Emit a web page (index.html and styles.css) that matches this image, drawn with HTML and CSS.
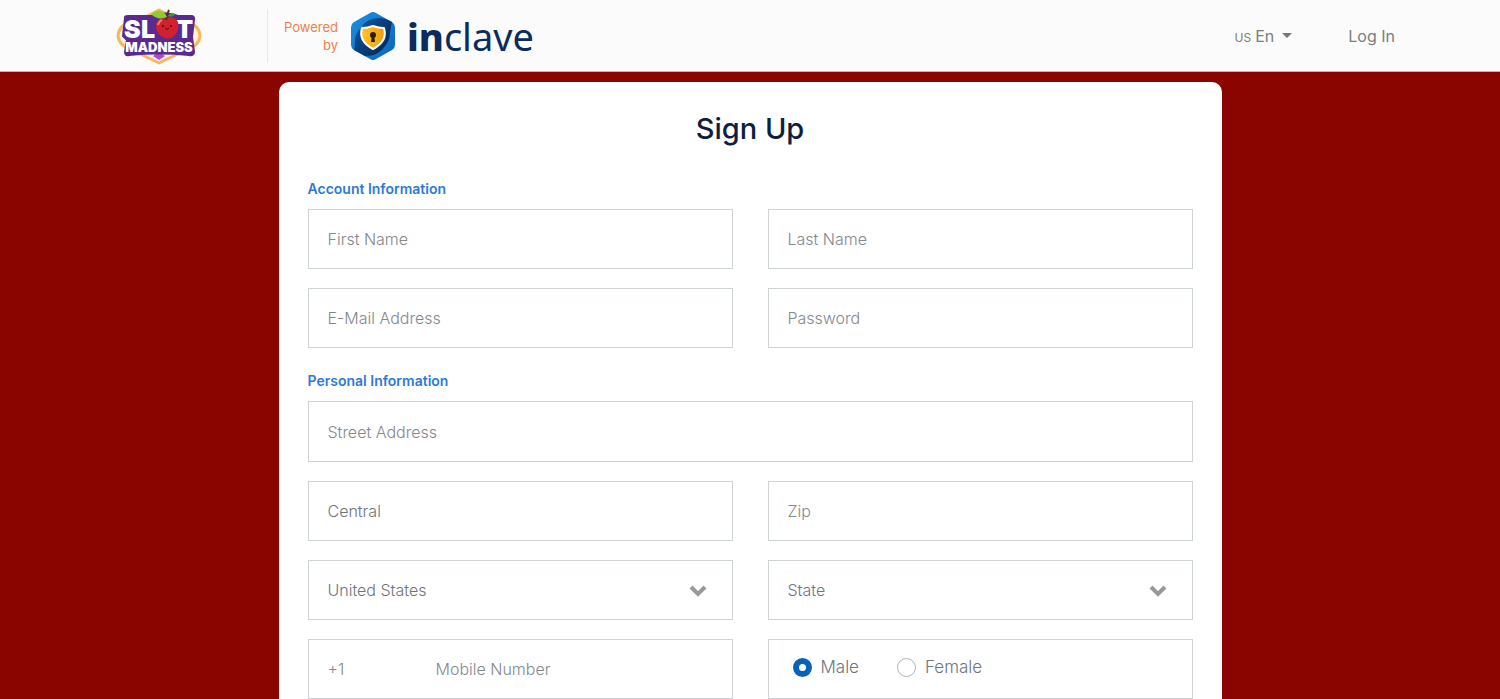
FILE: index.html
```html
<!DOCTYPE html>
<html lang="en">
<head>
  <meta charset="UTF-8" />
  <meta name="viewport" content="width=device-width, initial-scale=1" />
  <title>Sign Up</title>
  <link rel="stylesheet" href="styles.css">
</head>

<body>

  <header class="site-header">
    <a href="#" class="brand" aria-label="Slot Madness">
      <svg width="86" height="60" viewBox="0 0 86 60">
        <path d="M12 17 Q2 21 2 30 Q3 40 14 42 M74 17 Q84 21 84 30 Q83 40 72 42" fill="#fff3cf" stroke="#f3b95a" stroke-width="3" />
        <path d="M43 4 L70 18 L72 43 L43 57 L14 43 L16 18 Z" fill="#fbeaf6" stroke="#f3b95a" stroke-width="3" stroke-linejoin="round" />
        <path d="M43 46 L49 50 L43 54 L37 50 Z" fill="#b04bc8" />
        <path d="M9 12 Q8 10 12 10 L36 10 Q50 5 62 10 L75 10 Q79 10 78 14 L76 31 L78 46 Q78 50 73 49 Q43 46 13 49 Q9 50 9 46 L11 34 L7 30 Z" fill="#5b2a8e" stroke="#5b2a8e" stroke-width="2" stroke-linejoin="round" />
        <g class="brand-text">
          <text x="8" y="32" font-size="25">S</text>
          <text x="25" y="32" font-size="25">L</text>
          <text x="60" y="32" font-size="25">T</text>
          <text x="43" y="46" font-size="13" text-anchor="middle">MADNESS</text>
        </g>
        <path d="M50 13 Q58 9 62 16 Q64 25 57 31 Q52 34 47 31 Q39 27 40 18 Q43 10 50 13 Z" fill="#d3202f" />
        <path d="M42 19 Q43 15 46 14" fill="none" stroke="#f0776d" stroke-width="2" />
        <path d="M50 14 Q51 8 53 4" fill="none" stroke="#55301d" stroke-width="2" />
        <path d="M51 11 Q42 15 35 8 Q46 0 51 11 Z" fill="#8bcc2e" />
        <path d="M52 10 Q55 5 59 8 Q57 12 52 10 Z" fill="#3d9b31" />
        <circle cx="47" cy="20" r="1" fill="#4a0d16" />
        <circle cx="55" cy="20" r="1" fill="#4a0d16" />
        <path d="M49 22 Q51 25 53 22" fill="none" stroke="#4a0d16" />
      </svg>
    </a>

    <div class="powered">
      <span class="powered-label">Powered by</span>
      <svg width="44" height="48" viewBox="0 0 44 48" aria-hidden="true">
        <defs>
          <linearGradient id="hexBlue" x1="0" y1="0" x2="1" y2="1">
            <stop offset="0" stop-color="#1a8fe0" />
            <stop offset="1" stop-color="#0a66bb" />
          </linearGradient>
          <linearGradient id="swirlTop" x1="0" y1="0" x2="1" y2="1">
            <stop offset="0" stop-color="#0d5aa6" />
            <stop offset="1" stop-color="#061e48" />
          </linearGradient>
          <linearGradient id="swirlBottom" x1="0" y1="0" x2="1" y2="1">
            <stop offset="0" stop-color="#0c58a5" />
            <stop offset="1" stop-color="#062452" />
          </linearGradient>
          <linearGradient id="shieldGold" x1="0" y1="0" x2="1" y2="0">
            <stop offset="0" stop-color="#ffc629" />
            <stop offset="1" stop-color="#f29a0c" />
          </linearGradient>
        </defs>
        <path d="M19 1 Q22 -1 25 1 L41 10 Q44 12 44 15 L44 33 Q44 36 41 38 L25 47 Q22 49 19 47 L3 38 Q0 36 0 33 L0 15 Q0 12 3 10 Z" fill="url(#hexBlue)" />
        <path d="M10 16 Q15 6 28 6 Q34 6 41 10 Q40 15 39 20 Q39 29 33 35 Q36 25 33 16 Z" fill="url(#swirlTop)" />
        <path d="M10 16 Q4 21 4 29 Q4 35 3 38 L14 44 Q28 44 34 34 L34 28 L22 37 L11 28 Z" fill="url(#swirlBottom)" />
        <path d="M22 14 Q27 16 33 16 Q37 29 22 37 Q7 29 11 16 Q17 16 22 14 Z" fill="url(#shieldGold)" stroke="#fff" stroke-width="2" stroke-linejoin="round" />
        <circle cx="22" cy="23" r="3" fill="#27200e" />
        <path d="M21 23 H23 L24 30 H20 Z" fill="#27200e" />
      </svg>
      <span class="wordmark"><b>in</b>clave</span>
    </div>

    <nav class="site-nav">
      <button type="button" class="lang"><small>US</small> En <span class="caret"></span></button>
      <a href="#">Log In</a>
    </nav>
  </header>

  <main class="card">
    <h1>Sign Up</h1>

    <form id="signup-form">
      <!-- Account Information -->
      <h2>Account Information</h2>
      <div class="fields">
        <input type="text" class="field" name="firstName" placeholder="First Name" aria-label="First Name" />
        <input type="text" class="field" name="lastName" placeholder="Last Name" aria-label="Last Name" />
        <input type="email" class="field" name="email" placeholder="E-Mail Address" aria-label="E-Mail Address" />
        <input type="password" class="field" name="password" placeholder="Password" aria-label="Password" />
      </div>

      <!-- Personal Information -->
      <h2>Personal Information</h2>
      <div class="fields">
        <input type="text" class="field wide" name="address" placeholder="Street Address" aria-label="Street Address" />
        <input type="text" class="field" name="city" value="Central" aria-label="City" />
        <input type="text" class="field" name="zip" placeholder="Zip" aria-label="Zip" />
        <div class="select-wrap">
          <select class="field" name="country" aria-label="Country">
            <option>United States</option>
          </select>
          <svg class="chevron" width="18" height="14" viewBox="0 0 18 14"><path d="M2 3 L9 10 L16 3" /></svg>
        </div>
        <div class="select-wrap">
          <select class="field" name="state" aria-label="State">
            <option>State</option>
          </select>
          <svg class="chevron" width="18" height="14" viewBox="0 0 18 14"><path d="M2 3 L9 10 L16 3" /></svg>
        </div>
        <div class="field phone">
          <input type="text" class="code" name="code" placeholder="+1" aria-label="Country code" />
          <input type="tel" name="mobile" placeholder="Mobile Number" aria-label="Mobile Number" />
        </div>
        <div class="field gender">
          <label><input type="radio" name="gender" value="male" checked />Male</label>
          <label><input type="radio" name="gender" value="female" />Female</label>
        </div>
      </div>
    </form>
  </main>

</body>
</html>
```

FILE: styles.css
```css
* {
  box-sizing: border-box;
}
body {
  margin: 0;
  background: #8b0500;
  font-family: Inter, "Open Sans", sans-serif;
  font-weight: 300;
  color: #6c757d;
}
.site-header {
  display: flex;
  align-items: center;
  height: 72px;
  padding: 0 105px 0 116px;
  background: #fbfbfb;
  border-bottom: 1px solid #c9b5b3;
}
.brand {
  display: block;
  height: 60px;
}
.brand-text {
  font-family: Inter, sans-serif;
  font-weight: 900;
  fill: #fff;
}
.powered {
  display: flex;
  align-items: center;
  height: 54px;
  margin-left: 65px;
  padding-left: 16px;
  border-left: 1px solid #e6e8f0;
}
.powered-label {
  width: 54px;
  margin-right: 13px;
  font-size: 13px;
  font-weight: 400;
  line-height: 18px;
  text-align: right;
  color: #ef7f45;
}
.wordmark {
  margin-left: 12px;
  font-family: "Noto Sans", sans-serif;
  font-size: 38px;
  font-weight: 400;
  line-height: 48px;
  color: #0b2c5c;
}
.wordmark b {
  font-weight: 800;
}
.site-nav {
  display: flex;
  align-items: center;
  gap: 56px;
  margin-left: auto;
  font-size: 16px;
  font-weight: 400;
}
.site-nav a {
  color: #7d7d7d;
  text-decoration: none;
}
.lang {
  display: flex;
  align-items: baseline;
  gap: 4px;
  padding: 0;
  border: none;
  background: none;
  font: inherit;
  color: #7d7d7d;
  cursor: pointer;
}
.lang small {
  font-size: 12px;
}
.caret {
  align-self: center;
  margin-left: 4px;
  border: 5px solid transparent;
  border-top-color: #777;
  border-bottom: none;
}
.card {
  max-width: 943px;
  margin: 10px auto 40px;
  padding: 27px 29px 40px;
  background: #fff;
  border-radius: 10px;
}
h1 {
  margin: 0 0 31px;
  font-size: 29px;
  font-weight: 500;
  line-height: 40px;
  text-align: center;
  color: #0c1e42;
}
h2 {
  margin: 0 0 12px;
  font-size: 14px;
  font-weight: 600;
  line-height: 17px;
  color: #2b7bd6;
}
.fields {
  display: grid;
  grid-template-columns: 1fr 1fr;
  gap: 19px 35px;
  margin-bottom: 24px;
}
.field {
  width: 100%;
  height: 60px;
  padding: 0 19px;
  border: 1px solid #ced4d6;
  border-radius: 0;
  background: #fff;
  font: inherit;
  font-size: 16px;
  color: #6c757d;
}
.wide {
  grid-column: 1 / -1;
  height: 61px;
}
::placeholder {
  color: #83888d;
  opacity: 1;
}
.select-wrap {
  position: relative;
}
select.field {
  appearance: none;
}
.chevron {
  position: absolute;
  top: 24px;
  right: 26px;
  pointer-events: none;
}
.chevron path {
  fill: none;
  stroke: #999;
  stroke-width: 4;
}
.phone {
  display: flex;
}
.phone input {
  flex: 1;
  min-width: 0;
  padding: 0;
  border: none;
  background: none;
  font: inherit;
  color: inherit;
}
.phone .code {
  flex: 0 0 108px;
}
.gender {
  display: flex;
  align-items: center;
  gap: 38px;
  padding: 0 24px 4px;
  font-size: 17px;
}
.gender label {
  display: flex;
  align-items: center;
  gap: 9px;
}
.gender input {
  appearance: none;
  width: 19px;
  height: 19px;
  margin: 0;
  border: 1px solid #adb5bd;
  border-radius: 50%;
  background: #fff;
}
.gender input:checked {
  border: 6px solid #0763b8;
}
@media (max-width: 700px) {
  .site-header {
    padding: 0 16px;
  }
  .powered {
    margin-left: 16px;
  }
  .fields {
    grid-template-columns: 1fr;
  }
}
```
